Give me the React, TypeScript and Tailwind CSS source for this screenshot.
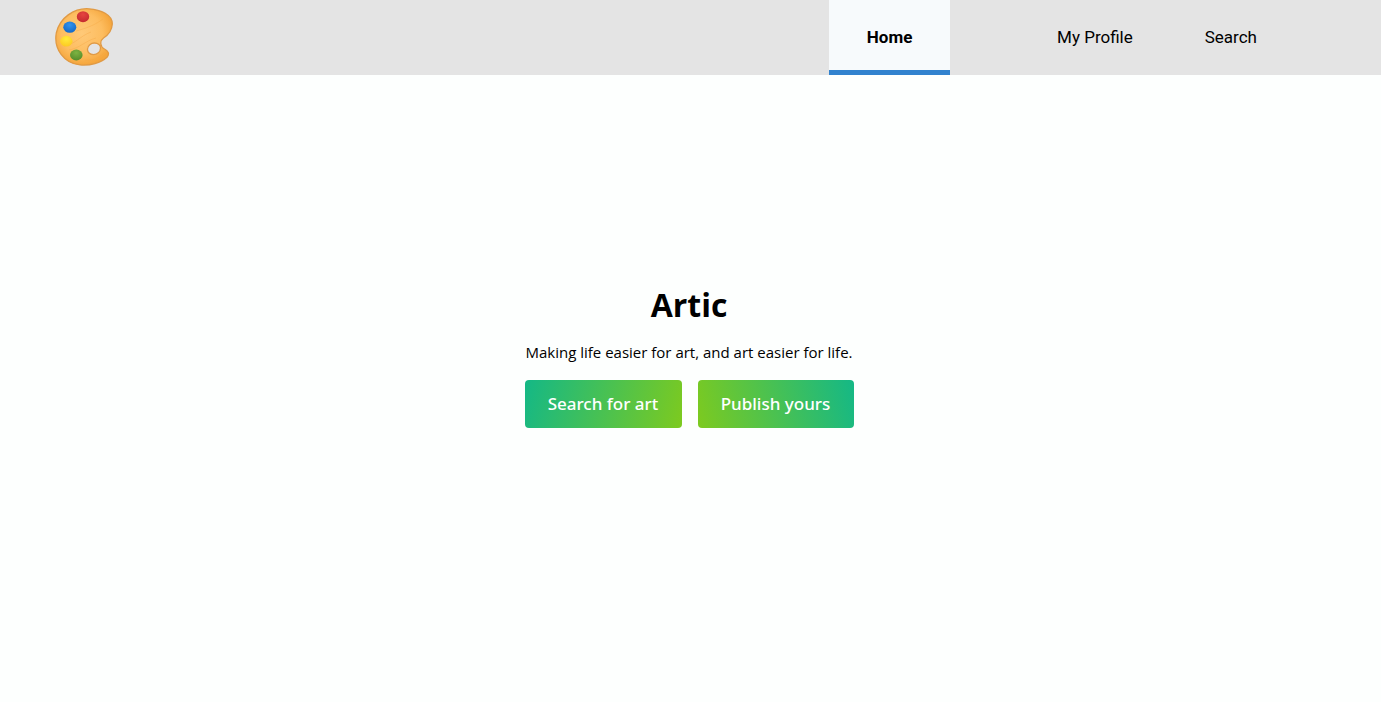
import React from "react";

function PaletteLogo() {
  return (
    <svg viewBox="0 0 60 60" className="size-15" role="img" aria-label="Artic">
      <defs>
        <radialGradient id="wood" cx="46%" cy="44%" r="56%">
          <stop offset="0" stopColor="#ffc978" />
          <stop offset="0.65" stopColor="#fdbd60" />
          <stop offset="1" stopColor="#f5a63c" />
        </radialGradient>
        <radialGradient id="red" cx="50%" cy="30%" r="70%">
          <stop offset="0" stopColor="#e5453f" />
          <stop offset="1" stopColor="#c42a2f" />
        </radialGradient>
        <radialGradient id="blue" cx="50%" cy="30%" r="70%">
          <stop offset="0" stopColor="#3393ee" />
          <stop offset="1" stopColor="#1268c6" />
        </radialGradient>
        <radialGradient id="yellow" cx="50%" cy="30%" r="70%">
          <stop offset="0" stopColor="#ffeb3b" />
          <stop offset="1" stopColor="#fcc922" />
        </radialGradient>
        <radialGradient id="green" cx="50%" cy="30%" r="70%">
          <stop offset="0" stopColor="#7cb342" />
          <stop offset="1" stopColor="#568c2b" />
        </radialGradient>
      </defs>
      <path
        fillRule="evenodd"
        d="M35 1.8C20 .8 5.500 11 2.300 26C-.5 42 10 56.500 26 57.900C36 58.800 47 56 53 50.300C56 46.500 54 43.800 50.500 42C46 39.500 45.500 34 49.500 31C55 27.500 58 22.500 58.300 17C58.500 8 47 2.500 35 1.800ZM40.400 36C44.200 36 46.600 38.200 46.500 41.200C46.400 45 43.200 47.600 39.500 47.600C35.700 47.600 33.300 45 33.500 42C33.800 38.400 36.900 36 40.400 36Z"
        fill="url(#wood)"
        stroke="#e09a45"
        strokeWidth="1.300"
      />
      <path
        d="M10 39C20 38 26 29 37 25M15 43C26 41 31 34 42 31M22 24C33 21 41 18 49 12M31 53C39 54 45 51 50 46"
        fill="none"
        stroke="#f3a440"
        strokeWidth="1"
        opacity="0.350"
      />
      <ellipse cx="29" cy="9.700" rx="6.200" ry="5.500" fill="url(#red)" />
      <ellipse cx="15.800" cy="20.200" rx="6.500" ry="5.600" fill="url(#blue)" />
      <ellipse cx="12.300" cy="34.200" rx="6.200" ry="5.400" fill="url(#yellow)" />
      <ellipse cx="22.300" cy="48" rx="6.300" ry="5.400" fill="url(#green)" />
    </svg>
  );
}

export default function App() {
  return (
    <div className="flex min-h-screen flex-col bg-[#fdfffe] text-black">
      <header className="flex h-[75px] shrink-0 items-stretch justify-between bg-[#e4e4e4] pr-[88px] pl-[54px] font-['Roboto',sans-serif] text-[17px]">
        <a href="#home" className="flex items-center pb-0.5">
          <PaletteLogo />
        </a>
        <nav className="flex items-stretch">
          <a
            href="#home"
            aria-current="page"
            className="mr-[71px] flex w-[121px] items-center justify-center border-b-5 border-[#3182ce] bg-[#f7fafc] pt-[5px] font-bold"
          >
            Home
          </a>
          <a href="#profile" className="flex items-center px-9">
            My Profile
          </a>
          <a href="#search" className="flex items-center px-9">
            Search
          </a>
        </nav>
      </header>
      <main className="flex flex-1 flex-col items-center justify-center pr-[3px] pb-[65px] font-['Open_Sans',sans-serif]">
        <h1 className="text-[32px] leading-10 font-bold">Artic</h1>
        <p className="mt-[15px] text-[15px] leading-6">
          Making life easier for art, and art easier for life.
        </p>
        <div className="mt-4 flex gap-4 font-['Noto_Sans',sans-serif] text-[17px] font-medium text-white">
          <button className="h-12 w-[157px] rounded-sm bg-linear-[105deg] from-[#14b886] to-[#7dca1f]">
            Search for art
          </button>
          <button className="h-12 w-[156px] rounded-sm bg-linear-[75deg] from-[#7dca1f] to-[#14b886]">
            Publish yours
          </button>
        </div>
      </main>
    </div>
  );
}
